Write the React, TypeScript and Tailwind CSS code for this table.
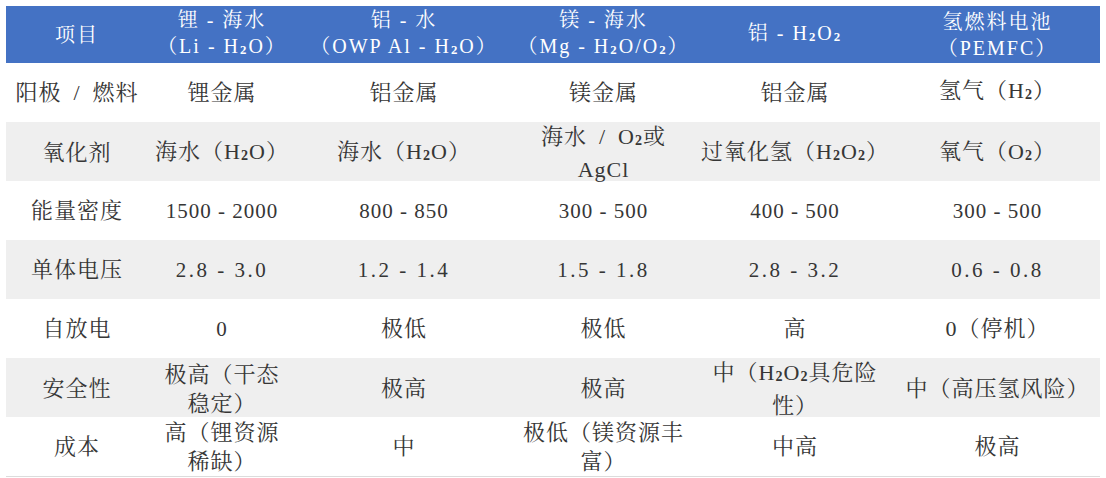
import React from "react";

const FONT = {
  fontFamily:
    '"Liberation Serif", "Noto Serif CJK SC", "Noto Sans CJK SC", serif',
};

const S = ({ c = "2" }: { c?: string }) => (
  <span className="text-[0.64em] font-bold align-[-0.06em]">{c}</span>
);

const N = ({ children, dec = false }: { children: React.ReactNode; dec?: boolean }) => (
  <span className={`text-[21px] ${dec ? "tracking-[2.5px]" : "tracking-[1px]"}`}>{children}</span>
);

const SL = "\u2002/\u2002";

type Row = { gray: boolean; cells: React.ReactNode[] };

const rows: Row[] = [
  {
    gray: false,
    cells: [
      <>阳极{SL}燃料</>,
      <>锂金属</>,
      <>铝金属</>,
      <>镁金属</>,
      <>铝金属</>,
      <>
        氢气（H<S />）
      </>,
    ],
  },
  {
    gray: true,
    cells: [
      <>氧化剂</>,
      <>
        海水（H<S />O）
      </>,
      <>
        海水（H<S />O）
      </>,
      <>
        海水{SL}O<S />或<br />
        AgCl
      </>,
      <>
        过氧化氢（H<S />O<S />）
      </>,
      <>
        氧气（O<S />）
      </>,
    ],
  },
  {
    gray: false,
    cells: [
      <>能量密度</>,
      <N>1500 - 2000</N>,
      <N>800 - 850</N>,
      <N>300 - 500</N>,
      <N>400 - 500</N>,
      <N>300 - 500</N>,
    ],
  },
  {
    gray: true,
    cells: [
      <>单体电压</>,
      <N dec>2.8 - 3.0</N>,
      <N dec>1.2 - 1.4</N>,
      <N dec>1.5 - 1.8</N>,
      <N dec>2.8 - 3.2</N>,
      <N dec>0.6 - 0.8</N>,
    ],
  },
  {
    gray: false,
    cells: [<>自放电</>, <N>0</N>, <>极低</>, <>极低</>, <>高</>, <>0（停机）</>],
  },
  {
    gray: true,
    cells: [
      <>安全性</>,
      <>
        极高（干态
        <br />
        稳定）
      </>,
      <>极高</>,
      <>极高</>,
      <>
        中（H<S />O<S />具危险
        <br />
        性）
      </>,
      <>中（高压氢风险）</>,
    ],
  },
  {
    gray: false,
    cells: [
      <>成本</>,
      <>
        高（锂资源
        <br />
        稀缺）
      </>,
      <>中</>,
      <>
        极低（镁资源丰
        <br />
        富）
      </>,
      <>中高</>,
      <>极高</>,
    ],
  },
];

const headers: React.ReactNode[] = [
  <>项目</>,
  <>
    锂 - 海水
    <br />
    （Li - H<S />O）
  </>,
  <>
    铝 - 水
    <br />
    （OWP Al - H<S />O）
  </>,
  <>
    镁 - 海水
    <br />
    （Mg - H<S />O/O<S />）
  </>,
  <>
    铝 - H<S />O<S />
  </>,
  <>
    氢燃料电池
    <br />
    （PEMFC）
  </>,
];

const GRID = "grid grid-cols-[142px_148px_216px_183px_200px_205px]";

export default function App() {
  return (
    <div className="w-[1106px] h-[478px] bg-white overflow-hidden" style={FONT}>
      <div className="pl-[6px] pt-[6px]">
        <div className="w-[1094px] border-b border-[#dcdcdc]">
          <div className={`${GRID} h-[57px] bg-[#4472c4] text-white`}>
            {headers.map((h, i) => (
              <div
                key={i}
                className="flex items-center justify-center text-center text-[20px] leading-[26px] tracking-[2px] whitespace-nowrap"
              >
                <div className="pt-[1px]">{h}</div>
              </div>
            ))}
          </div>
          {rows.map((r, ri) => (
            <div
              key={ri}
              className={`${GRID} h-[59px] ${r.gray ? "bg-[#efefef]" : "bg-white"} text-[#363636]`}
            >
              {r.cells.map((c, ci) => (
                <div
                  key={ci}
                  className="flex items-center justify-center text-center text-[22px] leading-[29px] tracking-[1px] whitespace-nowrap"
                >
                  <div>{c}</div>
                </div>
              ))}
            </div>
          ))}
        </div>
      </div>
    </div>
  );
}
